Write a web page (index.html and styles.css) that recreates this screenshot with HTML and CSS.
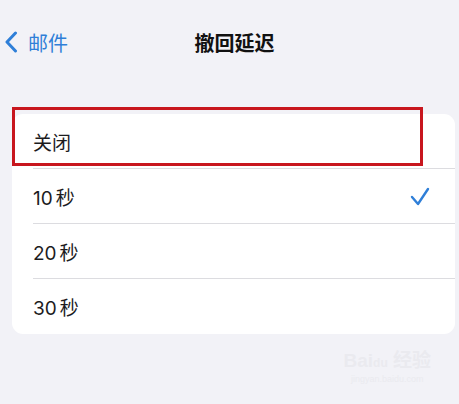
FILE: index.html
```html
<!DOCTYPE html>
<html lang="zh">
<head>
  <meta charset="UTF-8">
  <meta name="viewport" content="width=device-width, initial-scale=1.0">
  <title>撤回延迟</title>
  <link rel="stylesheet" href="styles.css">
</head>
<body>

  <div class="nav">
    <a href="#" class="back">
      <svg class="chevron" width="14" height="22" viewBox="0 0 14 22">
        <path d="M11.5 2 L3 11 L11.5 20" fill="none" stroke="#2f7fd8" stroke-width="3" stroke-linecap="round" stroke-linejoin="round"/>
      </svg>
      <span>邮件</span>
    </a>
    <h1>撤回延迟</h1>
    <div></div>
  </div>

  <div class="card">
    <!-- cadre rouge d'annotation -->
    <div class="mark"></div>
    <div class="row">关闭</div>
    <div class="row"><span>10<span class="unit">秒</span></span>
      <svg class="check" width="20" height="19" viewBox="0 0 20 19">
        <path d="M2 10 L8 17 L18 2" fill="none" stroke="#2f7fd8" stroke-width="2.4" stroke-linecap="round" stroke-linejoin="round"/>
      </svg>
    </div>
    <div class="row"><span>20<span class="unit">秒</span></span></div>
    <div class="row"><span>30<span class="unit">秒</span></span></div>
  </div>

  <div class="watermark">
    <div class="wm-logo">Bai<span class="wm-du">du</span> 经验</div>
    <div class="wm-url">jingyan.baidu.com</div>
  </div>

</body>
</html>
```

FILE: styles.css
```css
body {
  margin: 0;
  padding: 0;
  background-color: #f2f2f7;
  font-family: Inter, "Noto Sans CJK SC", sans-serif;
  color: #1c1c1e;
  width: 459px;
  height: 404px;
  position: relative;
  overflow: hidden;
}
.nav {
  display: grid;
  grid-template-columns: 1fr auto 1fr;
  align-items: center;
  height: 84px;
  padding-left: 4px;
}
.back {
  display: flex;
  align-items: center;
  gap: 10px;
  color: #2f7fd8;
  text-decoration: none;
  font-size: 20px;
  padding-left: 0;
}
.chevron {
  display: block;
}
.nav h1 {
  margin: 0;
  font-size: 20px;
  font-weight: 700;
  color: #111;
  padding-left: 6px;
}
.card {
  position: relative;
  margin: 30px 4px 0 12px;
  background-color: white;
  border-radius: 11px;
}
.row {
  height: 55px;
  display: flex;
  align-items: center;
  justify-content: space-between;
  margin-left: 21px;
  padding-right: 25px;
  font-size: 19px;
  box-shadow: inset 0 -1px 0 #dcdce0;
}
.row:last-child {
  box-shadow: none;
}
.unit {
  margin-left: 3px;
}
.check {
  display: block;
}
.mark {
  position: absolute;
  top: -7px;
  left: 0;
  width: 405px;
  height: 53px;
  border: 3px solid #c8161e;
}
.watermark {
  position: absolute;
  right: 28px;
  bottom: 20px;
  color: #eaeaef;
  text-align: center;
  font-family: "Liberation Sans", "Noto Sans CJK SC", sans-serif;
}
.wm-logo {
  font-size: 19px;
  font-weight: 700;
}
.wm-du {
  font-size: 12px;
}
.wm-url {
  font-size: 9px;
  margin-top: 2px;
}
```
